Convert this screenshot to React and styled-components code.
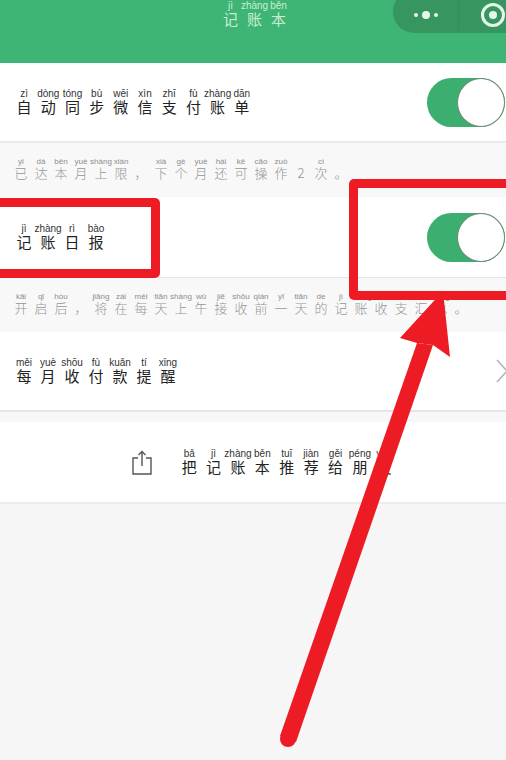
import React from 'react';
import styled, { createGlobalStyle } from 'styled-components';

const GlobalStyle = createGlobalStyle`
  html, body { margin: 0; padding: 0; background: #f6f6f6; }
  body { font-family: "Noto Sans CJK SC", "Noto Sans", sans-serif; }
`;

const words = (hanzi, pinyin) => {
  const py = pinyin.split(' ');
  return [...hanzi].map((ch, i) => [ch, py[i] === '-' ? '' : py[i]]);
};

const AnnotatedText = ({ hanzi, pinyin, pitch = 24.2, small, light }) => (
  <Line>
    {words(hanzi, pinyin).map(([ch, py], i) => (
      <Cell key={i} $pitch={pitch}>
        <Pinyin $small={small} $light={light}>{py || '\u00a0'}</Pinyin>
        <Hanzi $small={small} $light={light}>{ch}</Hanzi>
      </Cell>
    ))}
  </Line>
);

const Toggle = () => (
  <Track>
    <Knob />
  </Track>
);

const App = () => (
  <Page>
    <GlobalStyle />
    <Soft>
      <Header>
        <TitleSlot>
          <AnnotatedText hanzi="记账本" pinyin="jì zhàng běn" pitch={24} light />
        </TitleSlot>
        <Capsule>
          <Dots>
            <Dot $size={4} />
            <Dot $size={8} />
            <Dot $size={4} />
          </Dots>
          <CapsuleLine />
          <Target>
            <TargetDot />
          </Target>
        </Capsule>
      </Header>

      <Row $height={80} $border="2px solid #e9e9e9">
        <AnnotatedText hanzi="自动同步微信支付账单" pinyin="zì dòng tóng bù wēi xìn zhī fù zhàng dān" />
        <Toggle />
      </Row>
      <Note $height={54}>
        <AnnotatedText
          hanzi="已达本月上限，下个月还可操作2次。"
          pinyin="yǐ dá běn yuè shàng xiàn - xià gè yuè hái kě cāo zuò - cì -"
          pitch={20}
          small
        />
      </Note>

      <Row $height={81} $border="1px solid #e4e4e4">
        <AnnotatedText hanzi="记账日报" pinyin="jì zhàng rì bào" pitch={24} />
        <Toggle />
      </Row>
      <Note $height={54}>
        <AnnotatedText
          hanzi="开启后，将在每天上午接收前一天的记账收支汇总。"
          pinyin="kāi qǐ hòu - jiāng zài měi tiān shàng wǔ jiē shōu qián yī tiān de jì zhàng shōu zhī huì zǒng -"
          pitch={20}
          small
        />
      </Note>

      <Row $height={80} $border="2px solid #e6e6e6">
        <AnnotatedText hanzi="每月收付款提醒" pinyin="měi yuè shōu fù kuǎn tí xǐng" pitch={24} />
        <Chevron viewBox="0 0 12 24">
          <path d="M1 1 L11 12 L1 23" fill="none" stroke="#b5b5b5" strokeWidth="1.6" />
        </Chevron>
      </Row>
      <Spacer />

      <ShareRow>
        <svg width="20" height="25" viewBox="0 0 20 25">
          <path d="M6 8 H1 V24 H19 V8 H14" fill="none" stroke="#555" strokeWidth="1.4" />
          <path d="M10 16 V1.5 M6.5 5 L10 1.5 L13.5 5" fill="none" stroke="#555" strokeWidth="1.4" />
        </svg>
        <AnnotatedText hanzi="把记账本推荐给朋友" pinyin="bǎ jì zhàng běn tuī jiàn gěi péng yǒu" pitch={24.4} />
      </ShareRow>

      <LeftMark />
      <RightMark />
      <Arrow viewBox="0 0 506 760" width="506" height="760">
        <polygon points="417,343 433,345 296,742 280,736" fill="#ed1c24" />
        <circle cx="288" cy="739" r="8" fill="#ed1c24" />
        <polygon points="443,291 450,357 433,345 417,343 400,338" fill="#ed1c24" />
      </Arrow>
    </Soft>
  </Page>
);

const Page = styled.div`
  width: 506px;
  height: 760px;
  overflow: hidden;
  background: #f6f6f6;
`;

const Soft = styled.div`
  position: relative;
  height: 100%;
  filter: blur(0.45px);
`;

const Header = styled.header`
  height: 63px;
  background: #3eb475;
  position: relative;
  display: flex;
  justify-content: center;
`;

const TitleSlot = styled.div`
  padding-top: 1px;
  margin-left: 3px;
`;

const Capsule = styled.div`
  position: absolute;
  top: -10px;
  left: 393px;
  width: 140px;
  height: 43px;
  border-radius: 22px 0 0 22px;
  background: #37965f;
  display: flex;
  align-items: center;
  padding-top: 7px;
  box-sizing: border-box;
`;

const Dots = styled.div`
  width: 65px;
  display: flex;
  justify-content: center;
  align-items: center;
  gap: 4px;
`;

const Dot = styled.span`
  width: ${p => p.$size}px;
  height: ${p => p.$size}px;
  border-radius: 50%;
  background: #e6f5ea;
`;

const CapsuleLine = styled.span`
  width: 1px;
  height: 36px;
  margin-top: -7px;
  background: #338c59;
`;

const Target = styled.div`
  margin-left: 22px;
  width: 18px;
  height: 18px;
  border: 3px solid #e6f5ea;
  border-radius: 50%;
  display: flex;
  align-items: center;
  justify-content: center;
`;

const TargetDot = styled.span`
  width: 8px;
  height: 8px;
  border-radius: 50%;
  background: #e6f5ea;
`;

const Row = styled.div`
  height: ${p => p.$height}px;
  box-sizing: border-box;
  background: #fff;
  border-bottom: ${p => p.$border};
  padding: 0 1px 0 12px;
  display: flex;
  align-items: center;
  justify-content: space-between;
`;

const Note = styled.div`
  height: ${p => p.$height}px;
  box-sizing: border-box;
  background: #f8f8f8;
  padding: 14px 0 0 11px;
`;

const Spacer = styled.div`
  height: 10px;
  background: #f8f8f8;
`;

const ShareRow = styled.div`
  height: 82px;
  box-sizing: border-box;
  background: #fff;
  border-bottom: 2px solid #ececec;
  padding-left: 132px;
  display: flex;
  align-items: center;
  gap: 25px;
`;

const Line = styled.div`
  display: flex;
`;

const Cell = styled.div`
  width: ${p => p.$pitch}px;
  display: flex;
  flex-direction: column;
  align-items: center;
  flex-shrink: 0;
`;

const Pinyin = styled.span`
  font-family: "Liberation Sans", "Noto Sans", sans-serif;
  font-size: ${p => (p.$small ? 8 : 10)}px;
  line-height: ${p => (p.$small ? 9 : 10)}px;
  white-space: nowrap;
  color: ${p => (p.$light ? '#c9efd3' : p.$small ? '#8d8d8d' : '#333')};
`;

const Hanzi = styled.span`
  font-family: "Noto Sans CJK SC", sans-serif;
  font-weight: ${p => (p.$small ? 300 : 400)};
  font-size: ${p => (p.$small ? 13 : 15)}px;
  line-height: ${p => (p.$small ? 14 : 17)}px;
  margin-top: ${p => (p.$small ? 0 : -1)}px;
  color: ${p => (p.$light ? '#c9efd3' : p.$small ? '#969696' : '#222')};
`;

const Track = styled.div`
  width: 78px;
  height: 49px;
  flex-shrink: 0;
  border-radius: 25px;
  background: #3cae6f;
  display: flex;
  justify-content: flex-end;
`;

const Knob = styled.span`
  width: 48px;
  height: 49px;
  box-sizing: border-box;
  border-radius: 50%;
  background: #fff;
  border: 1.5px solid #6b8a78;
`;

const Chevron = styled.svg`
  width: 12px;
  height: 24px;
  flex-shrink: 0;
  margin-right: -3px;
`;

const LeftMark = styled.div`
  position: absolute;
  left: -20px;
  top: 198px;
  width: 180px;
  height: 80px;
  box-sizing: border-box;
  border: 9px solid #ed1c24;
  border-radius: 5px;
`;

const RightMark = styled.div`
  position: absolute;
  left: 349px;
  top: 179px;
  width: 200px;
  height: 121px;
  box-sizing: border-box;
  border: 9px solid #ed1c24;
  border-radius: 5px;
`;

const Arrow = styled.svg`
  position: absolute;
  left: 0;
  top: 0;
`;

export default App;
